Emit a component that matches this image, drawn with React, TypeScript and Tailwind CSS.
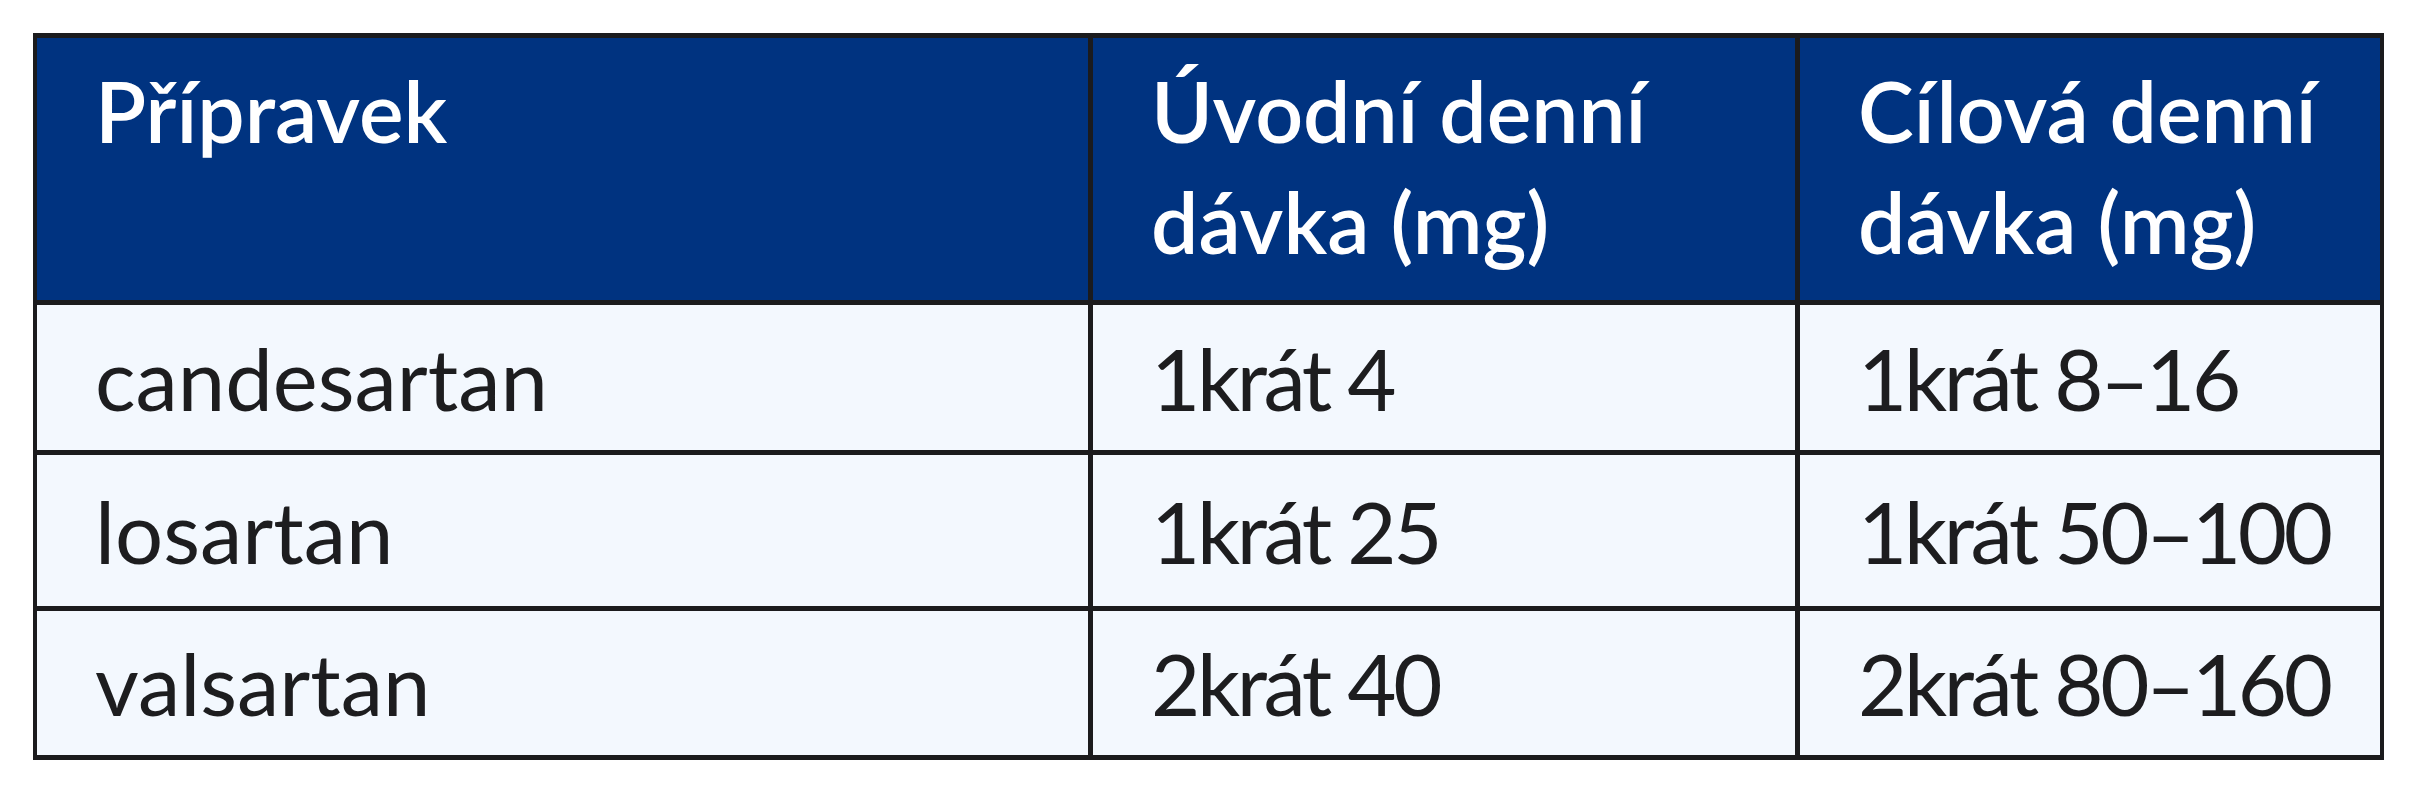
const header = ['Přípravek', 'Úvodní denní dávka (mg)', 'Cílová denní dávka (mg)']

const rows = [
  ['candesartan', '1krát 4', '1krát 8–16'],
  ['losartan', '1krát 25', '1krát 50–100'],
  ['valsartan', '2krát 40', '2krát 80–160'],
]

const rowHeights = ['h-[145px]', 'h-[151px]', 'h-[144px]']

export default function App() {
  return (
    <div className="min-h-screen bg-white pt-[33px] pl-[33px] font-['Lato','Liberation_Sans',sans-serif]">
      <div className="inline-grid grid-cols-[1051px_702px_580px] gap-x-[5px] gap-y-[5px] bg-[#1b1b1d] px-[4px] py-[5px]">
        {/* Header row */}
        {header.map((h) => (
          <div
            key={h}
            className="h-[262px] bg-[#003380] pl-[58px] pr-6 pt-[17px] text-[84px] font-semibold leading-[111px] text-white"
          >
            {h === 'Přípravek' ? (
              h
            ) : (
              <>
                {h.split(' ').slice(0, 2).join(' ')}
                <br />
                {h.split(' ').slice(2).join(' ')}
              </>
            )}
          </div>
        ))}

        {/* Body rows */}
        {rows.map((row, i) =>
          row.map((cell, j) => (
            <div
              key={`${i}-${j}`}
              className={`${rowHeights[i]} flex items-center bg-[#f3f8fe] pl-[58px] text-[85px] leading-[1.2] text-[#1d1d1f] ${
                j > 0 ? 'tracking-[-0.04em]' : ''
              }`}
            >
              {cell}
            </div>
          ))
        )}
      </div>
    </div>
  )
}
